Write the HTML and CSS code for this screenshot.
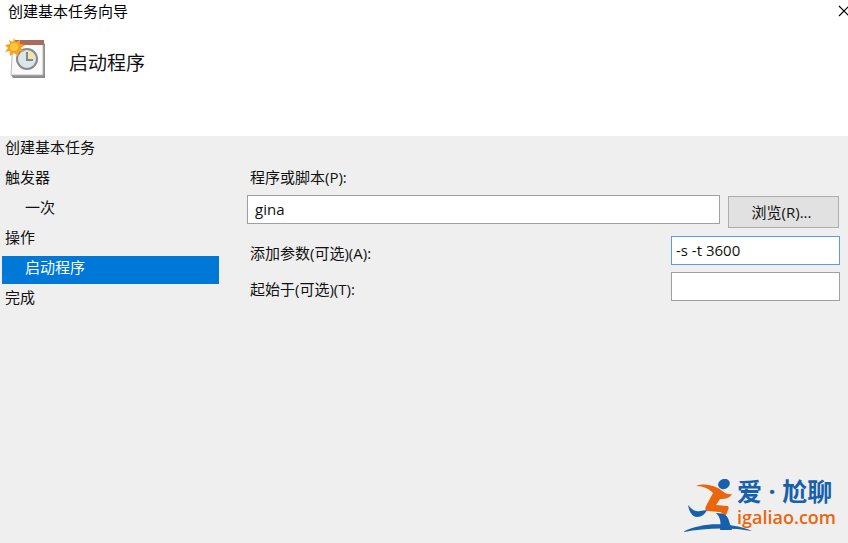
FILE: index.html
```html
<!DOCTYPE html>
<html lang="zh-CN">
<head>
    <meta charset="UTF-8">
    <title>创建基本任务向导</title>
    <link rel="stylesheet" href="styles.css">
</head>
<body>
    <header class="header">
        <div class="titlebar">
            <span>创建基本任务向导</span>
            <button class="close" type="button" aria-label="关闭">
                <svg width="12" height="12" viewBox="0 0 12 12"><path d="M1 1l10 10M11 1L1 11" stroke="#000" stroke-width="1.2"/></svg>
            </button>
        </div>
        <div class="heading">
            <svg class="task-icon" width="42" height="42" viewBox="0 0 42 42">
                <path d="M8 40h32V6l-2-2v33H6z" fill="#8b8b8b"/>
                <path d="M8 4h30v33H6z" fill="#fafafa" stroke="#bbb"/>
                <path d="M9 2h30v5H9z" fill="#a96a5d"/>
                <circle cx="22" cy="21" r="10" fill="#dce6ea" stroke="#858b91" stroke-width="2"/>
                <path d="M22 21v-8a8 8 0 0 1 8 8z" fill="#f5e3a0"/>
                <path d="M22 14v8h6" fill="none" stroke="#7c8894" stroke-width="2"/>
                <path d="M9 0l2 4 4-2v4l5 1-4 3 3 4-5-1-1 5-4-3-4 3v-5l-5 1 3-4-3-3 5-1-1-4 4 2z" fill="#f7a21b"/>
                <circle cx="9" cy="9" r="4" fill="#ffc743"/>
            </svg>
            <h1>启动程序</h1>
        </div>
    </header>
    <main class="wizard">
        <nav class="steps">
            <a class="step" href="#">创建基本任务</a>
            <a class="step" href="#">触发器</a>
            <a class="step sub" href="#">一次</a>
            <a class="step" href="#">操作</a>
            <a class="step sub active" href="#">启动程序</a>
            <a class="step" href="#">完成</a>
        </nav>
        <form class="form">
            <label class="program-label" for="program">程序或脚本(P):</label>
            <div class="program-row">
                <input class="program" id="program" type="text" value="gina">
                <button class="browse" type="button">浏览(R)...</button>
            </div>
            <div class="row">
                <label for="args">添加参数(可选)(A):</label>
                <input class="short focused" id="args" type="text" value="-s -t 3600">
            </div>
            <div class="row">
                <label for="start">起始于(可选)(T):</label>
                <input class="short" id="start" type="text">
            </div>
        </form>
    </main>
    <footer class="footer">
        <svg class="runner" width="70" height="54" viewBox="0 0 70 54">
            <ellipse cx="41" cy="5" rx="6" ry="5" transform="rotate(-25 41 5)" fill="#1660ac"/>
            <path d="M13 7c7-3 15-1 22 2 4 2 7 7 14 6-2 4-6 5-12 5l-4 6 11 1c2 0 2 2 1 4l-3 8c-2-4-3-6-6-6l-11-1c-3 0-3-2-2-5l7-13c-4-4-9-7-17-7z" fill="#eb650c"/>
            <path d="M5 26c4 5 8 7 12 6l7-1c-2 4-5 7-10 7s-8-6-9-12zM33 34c9 0 12 3 13 8l3 9H37c1-7 1-12-4-17z" fill="#1660ac"/>
            <path d="M0 53c19-10 47-10 69-1-22-4-47-3-69 1z" fill="#1660ac"/>
        </svg>
        <div class="brand">
            <span class="brand-name">爱 · 尬聊</span>
            <span class="brand-url">igaliao.com</span>
        </div>
    </footer>
</body>
</html>
```

FILE: styles.css
```css
* {
    box-sizing: border-box;
}
body {
    margin: 0;
    min-height: 100vh;
    display: flex;
    flex-direction: column;
    background: #efefef;
    color: #111;
    font-family: "Open Sans", "Noto Sans CJK SC", sans-serif;
    font-size: 15px;
    line-height: 22px;
}
input, button {
    font: inherit;
    color: inherit;
}
.header {
    height: 136px;
    background: #fff;
}
.titlebar {
    display: flex;
    justify-content: space-between;
    padding-left: 8px;
    color: #000;
}
.close {
    display: flex;
    align-items: center;
    padding: 0;
    border: 0;
    background: none;
    margin-right: -2px;
}
.heading {
    display: flex;
    align-items: center;
    gap: 22px;
    padding: 16px 5px;
}
h1 {
    margin: 8px 0 0;
    font-size: 19px;
    font-weight: 400;
}
.wizard {
    display: flex;
    gap: 28px;
    padding: 0 8px 0 2px;
}
.steps {
    width: 217px;
    display: flex;
    flex-direction: column;
    gap: 2px;
}
.step {
    padding: 0 3px 6px;
    color: inherit;
    text-decoration: none;
}
.sub {
    padding-left: 23px;
}
.active {
    background: #0078d7;
    color: #fff;
}
.form {
    flex: 1;
    padding-top: 30px;
}
.form label {
    padding-left: 3px;
}
.program-label {
    display: block;
    margin-bottom: 7px;
}
.program-row {
    display: flex;
    gap: 8px;
    height: 33px;
    margin-bottom: 8px;
}
.form input {
    height: 29px;
    padding: 0 7px 2px;
    border: 1px solid #a0a0a0;
    background: #fff;
}
.form .program {
    flex: 1;
    min-width: 0;
}
.browse {
    width: 111px;
    height: 32px;
    align-self: flex-end;
    margin-right: 1px;
    padding: 0 4px 0 0;
    border: 1px solid #adadad;
    background: #e1e1e1;
}
.row {
    display: flex;
    justify-content: space-between;
    margin-bottom: 7px;
}
.row label {
    padding-top: 6px;
}
.form .short {
    width: 169px;
    padding: 0 4px 2px;
}
.form .focused {
    border-color: #569de5;
}
.footer {
    display: flex;
    justify-content: flex-end;
    align-items: flex-end;
    margin-top: auto;
    padding: 0 12px 10px 0;
}
.runner {
    margin-right: -16px;
}
.brand {
    display: flex;
    flex-direction: column;
    margin-bottom: 4px;
    font-weight: 600;
}
.brand-name {
    color: #1660ac;
    font-size: 25px;
    font-weight: 700;
    line-height: 28px;
}
.brand-url {
    color: #eb650c;
    font-size: 18px;
    line-height: 24px;
}
```
